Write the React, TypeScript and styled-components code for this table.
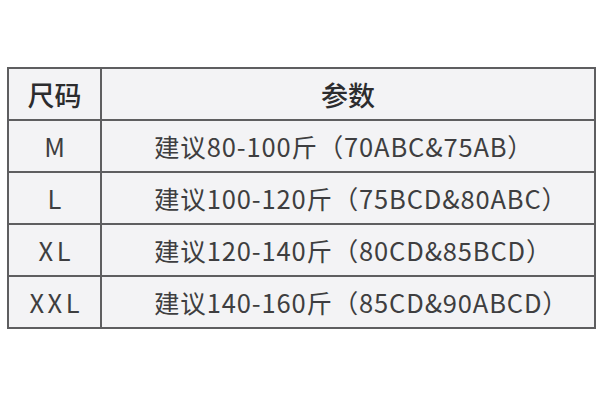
import styled, { createGlobalStyle } from 'styled-components';

const GlobalStyle = createGlobalStyle`
  html, body {
    margin: 0;
    padding: 0;
    background: #ffffff;
  }
  body {
    width: 600px;
    height: 400px;
    overflow: hidden;
    font-family: 'Noto Sans CJK SC', 'Noto Sans', sans-serif;
  }
`;

const Page = styled.div`
  padding: 67px 5px 0 7px;
`;

const Table = styled.table`
  width: 589px;
  border-collapse: collapse;
  border: 2px solid #5e5e60;
  background: #f3f3f5;
  table-layout: fixed;
`;

const Cell = styled.td`
  height: 50px;
  padding: 0;
  border: 2px solid #5e5e60;
  vertical-align: middle;
  line-height: 1;
  white-space: nowrap;
`;

const HeadCell = styled(Cell)`
  text-align: center;
  color: #2c2c2e;
  font-size: 27px;
  font-weight: 500;
`;

const SizeCell = styled(Cell)`
  text-align: center;
  color: #3e3e40;
  font-size: 25.5px;
  letter-spacing: 3.5px;
  padding-left: 3.5px;
`;

const InfoCell = styled(Cell)`
  text-align: left;
  padding-left: 52px;
  color: #3e3e40;
  font-size: 25.5px;
  letter-spacing: 0.85px;
`;

const rows = [
  { size: 'M', text: '建议80-100斤（70ABC&75AB）' },
  { size: 'L', text: '建议100-120斤（75BCD&80ABC）' },
  { size: 'XL', text: '建议120-140斤（80CD&85BCD）' },
  { size: 'XXL', text: '建议140-160斤（85CD&90ABCD）' },
];

const App = (): JSX.Element => (
  <Page>
    <GlobalStyle />
    <Table>
      <colgroup>
        <col style={{ width: 93 }} />
        <col />
      </colgroup>
      <tbody>
        <tr>
          <HeadCell>尺码</HeadCell>
          <HeadCell>参数</HeadCell>
        </tr>
        {rows.map((r) => (
          <tr key={r.size}>
            <SizeCell>{r.size}</SizeCell>
            <InfoCell>{r.text}</InfoCell>
          </tr>
        ))}
      </tbody>
    </Table>
  </Page>
);

export default App;
